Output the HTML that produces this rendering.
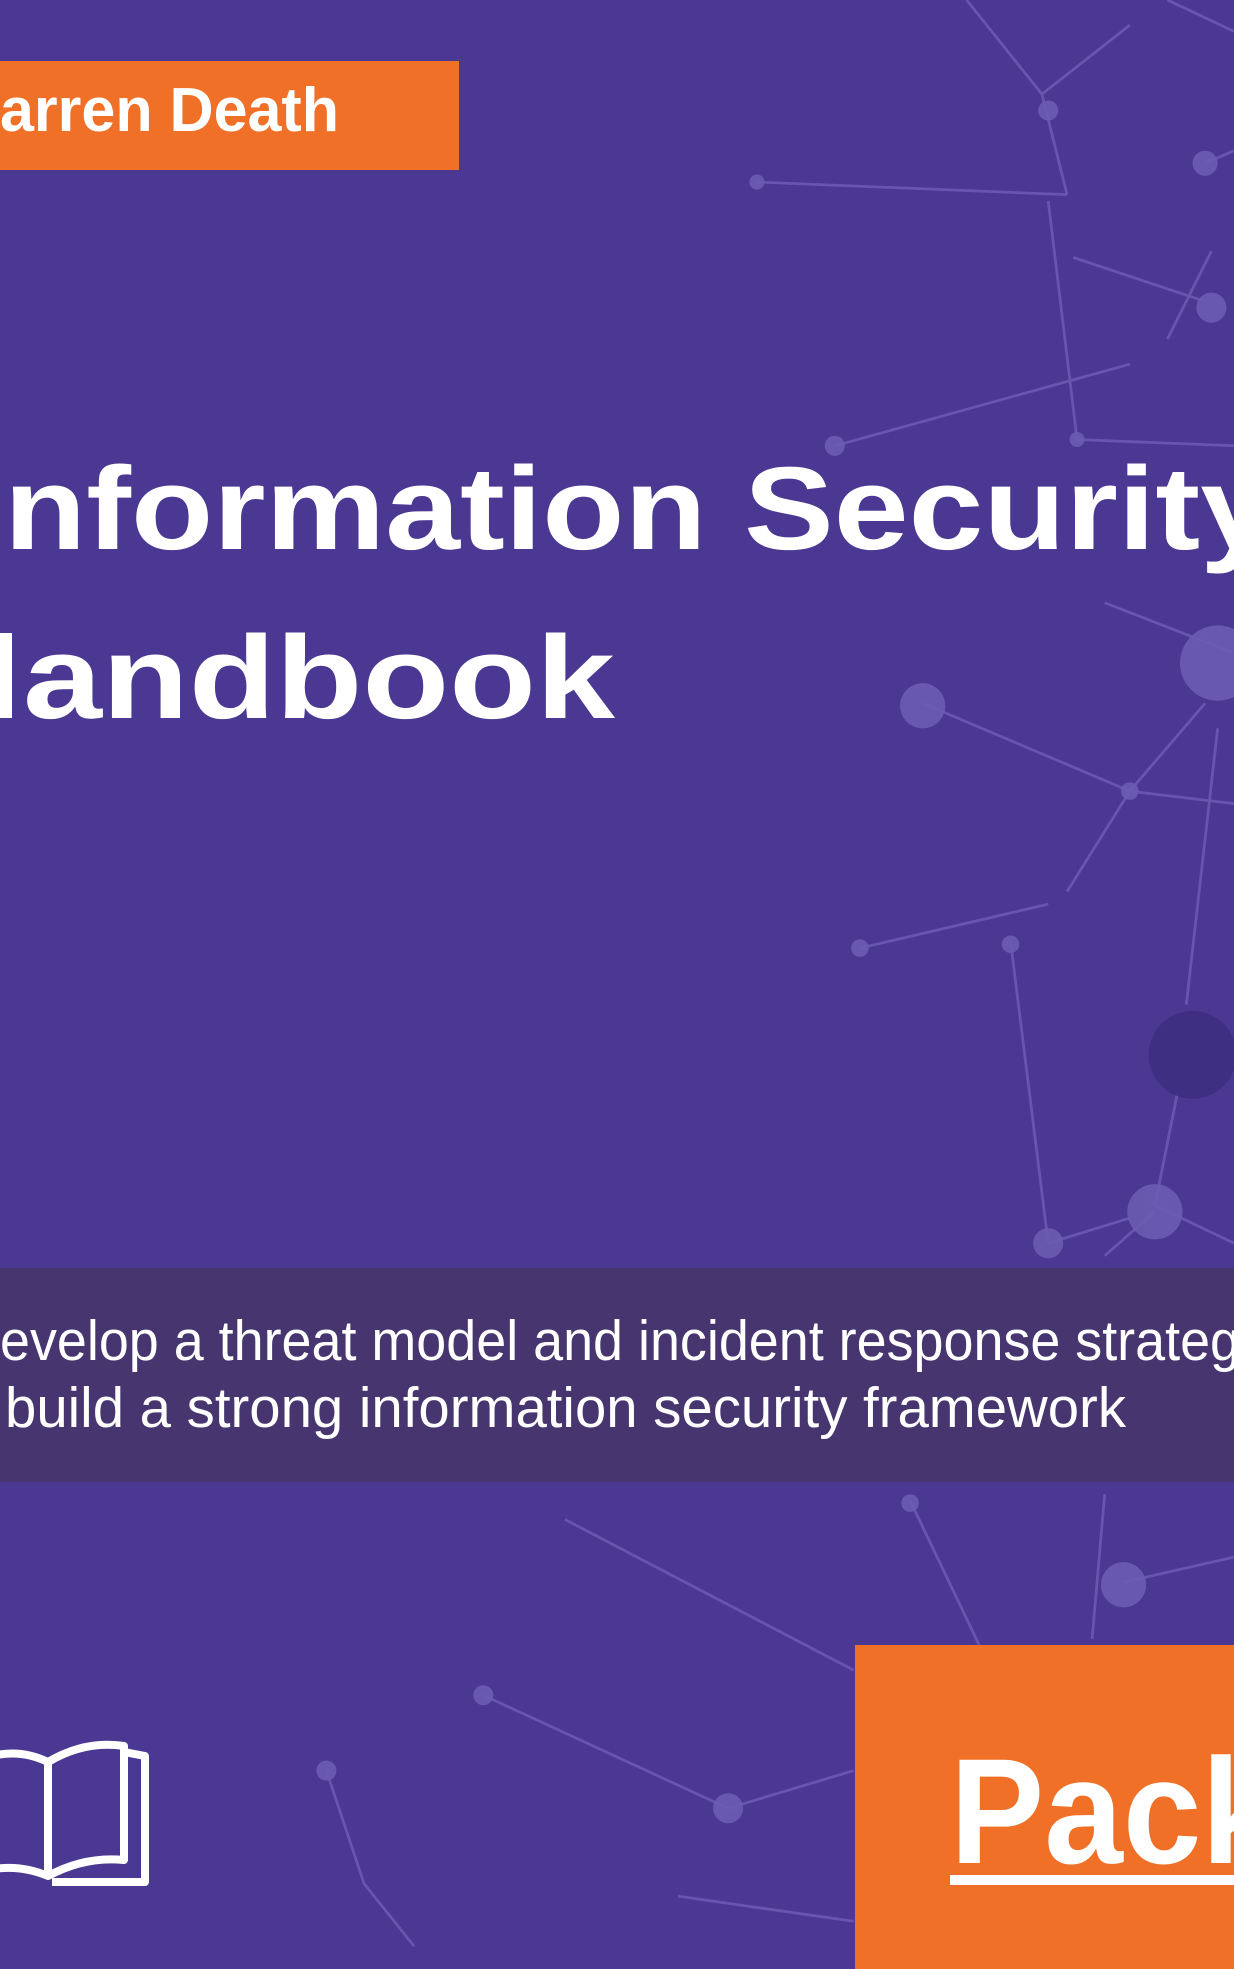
<!DOCTYPE html>
<html><head><meta charset="utf-8"><style>
html,body{margin:0;padding:0;}
body{width:1234px;height:1969px;overflow:hidden;background:#4a3892;position:relative;}
svg{position:absolute;left:0;top:0;}
</style></head><body>
<svg width="1234" height="1969" viewBox="0 0 983 1568" preserveAspectRatio="none">
<g stroke="#6b5cb2" stroke-width="2.2" fill="none" opacity="0.85">
<path d="M603 145 L850 155"/><path d="M770 0 L830 75 L850 155"/><path d="M830 75 L900 20"/><path d="M930 0 L983 25"/>
<path d="M855 205 L960 240"/><path d="M665 355 L900 290"/><path d="M835 160 L858 350 L983 355"/>
<path d="M965 200 L930 270"/><path d="M960 130 L983 120"/><path d="M735 560 L900 630 L983 640"/>
<path d="M900 630 L850 710"/><path d="M960 560 L900 630"/><path d="M685 755 L835 720"/><path d="M805 750 L835 990"/>
<path d="M970 580 L945 800"/><path d="M940 860 L920 960 L983 990"/><path d="M835 990 L900 970"/><path d="M880 1000 L920 965"/>
<path d="M450 1210 L680 1330"/><path d="M725 1195 L780 1310"/><path d="M880 1190 L870 1305"/><path d="M895 1260 L983 1240"/>
<path d="M385 1350 L580 1440 L680 1410"/><path d="M260 1410 L290 1500 L330 1550"/><path d="M540 1510 L680 1530"/>
<path d="M880 480 L983 520"/>
</g>
<g fill="#6b5cb2" opacity="0.9">
<circle cx="665" cy="355" r="8"/><circle cx="735" cy="562" r="18"/><circle cx="970" cy="528" r="30"/>
<circle cx="920" cy="965" r="22"/><circle cx="835" cy="990" r="12"/><circle cx="895" cy="1262" r="18"/>
<circle cx="580" cy="1440" r="12"/><circle cx="385" cy="1350" r="8"/><circle cx="260" cy="1410" r="8"/>
<circle cx="960" cy="130" r="10"/><circle cx="965" cy="245" r="12"/><circle cx="835" cy="88" r="8"/>
<circle cx="603" cy="145" r="6"/><circle cx="685" cy="755" r="7"/><circle cx="805" cy="752" r="7"/>
<circle cx="858" cy="350" r="6"/><circle cx="900" cy="630" r="7"/><circle cx="725" cy="1197" r="7"/>
</g>
<circle cx="950" cy="840" r="35" fill="#3f2f82"/>
</svg>
<svg width="1234" height="1969" viewBox="0 0 1234 1969">
<rect x="0" y="61" width="459" height="109" fill="#f07027"/>
<text x="0" y="131" font-family="Liberation Sans, sans-serif" font-weight="bold" font-size="62" fill="#fff" textLength="339" lengthAdjust="spacingAndGlyphs">arren Death</text>
<text x="4" y="549" font-family="Liberation Sans, sans-serif" font-weight="bold" font-size="118" fill="#fff" textLength="1271" lengthAdjust="spacingAndGlyphs">nformation Security</text>
<rect x="0" y="633" width="12" height="85" fill="#fff"/>
<text x="23" y="718" font-family="Liberation Sans, sans-serif" font-weight="bold" font-size="118" fill="#fff" textLength="592" lengthAdjust="spacingAndGlyphs">andbook</text>
<rect x="0" y="1268" width="1234" height="214" fill="#46356f"/>
<text x="0" y="1360" font-family="Liberation Sans, sans-serif" font-size="57" fill="#fff" textLength="1240" lengthAdjust="spacingAndGlyphs">evelop a threat model and incident response strateg</text>
<text x="5" y="1427" font-family="Liberation Sans, sans-serif" font-size="57" fill="#fff" textLength="1121" lengthAdjust="spacingAndGlyphs">build a strong information security framework</text>
<rect x="855" y="1645" width="379" height="324" fill="#f07027"/>
<text x="950" y="1863" font-family="Liberation Sans, sans-serif" font-weight="bold" font-size="150" fill="#fff" textLength="330" lengthAdjust="spacingAndGlyphs">Pack</text>
<rect x="950" y="1875" width="284" height="10" fill="#fff"/>
<g stroke="#fff" stroke-width="8" fill="none" stroke-linejoin="round">
<path d="M-20 1760 Q15 1746 48 1762 L48 1876 Q15 1862 -20 1872"/>
<path d="M48 1762 Q85 1740 124 1746 L124 1860 Q85 1856 48 1876"/>
<path d="M124 1752 L145 1756 L145 1882 L52 1882"/>
</g>
</svg>
</body></html>
